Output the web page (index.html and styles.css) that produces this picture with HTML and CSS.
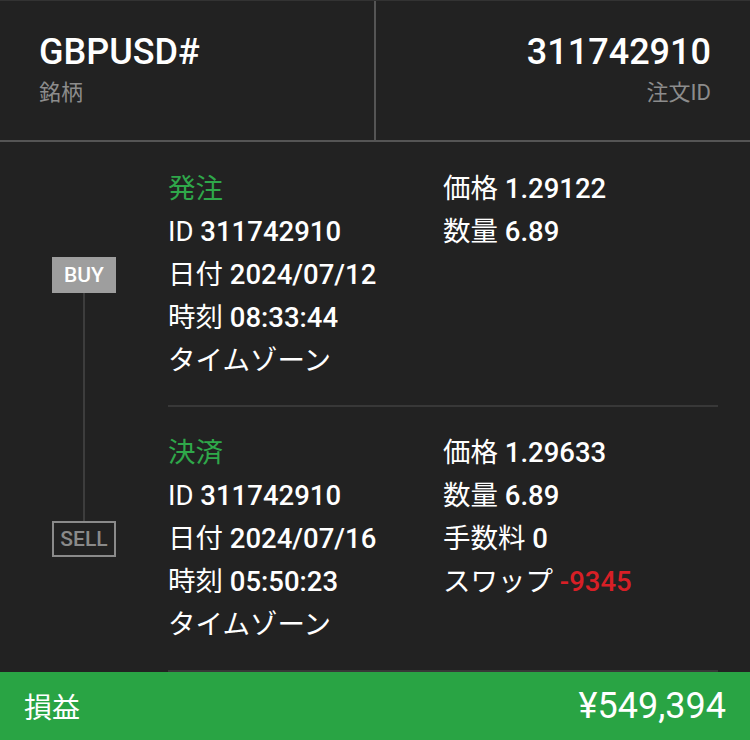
FILE: index.html
```html
<!DOCTYPE html>
<html lang="ja">
<head>
  <meta charset="UTF-8" />
  <meta name="viewport" content="width=device-width, initial-scale=1.0"/>
  <title>注文詳細</title>
  <link rel="stylesheet" href="styles.css">
</head>
<body>

  <!-- Summary header -->
  <header class="summary">
    <div class="summary-cell">
      <div class="summary-value">GBPUSD#</div>
      <div class="summary-label">銘柄</div>
    </div>
    <div class="summary-cell right">
      <div class="summary-value">311742910</div>
      <div class="summary-label">注文ID</div>
    </div>
  </header>

  <!-- Open / close timeline -->
  <main class="trade">
    <div class="timeline">
      <span class="badge buy">BUY</span>
      <span class="connector"></span>
      <span class="badge sell">SELL</span>
    </div>

    <div class="legs">
      <section class="leg">
        <div class="col">
          <div class="row title">発注</div>
          <div class="row">ID <b>311742910</b></div>
          <div class="row">日付 <b>2024/07/12</b></div>
          <div class="row">時刻 <b>08:33:44</b></div>
          <div class="row">タイムゾーン</div>
        </div>
        <div class="col">
          <div class="row">価格 <b>1.29122</b></div>
          <div class="row">数量 <b>6.89</b></div>
        </div>
      </section>

      <section class="leg">
        <div class="col">
          <div class="row title">決済</div>
          <div class="row">ID <b>311742910</b></div>
          <div class="row">日付 <b>2024/07/16</b></div>
          <div class="row">時刻 <b>05:50:23</b></div>
          <div class="row">タイムゾーン</div>
        </div>
        <div class="col">
          <div class="row">価格 <b>1.29633</b></div>
          <div class="row">数量 <b>6.89</b></div>
          <div class="row">手数料 <b>0</b></div>
          <div class="row">スワップ <b class="neg">-9345</b></div>
        </div>
      </section>
    </div>
  </main>

  <!-- Profit footer -->
  <footer class="profit">
    <span class="profit-label">損益</span>
    <span class="profit-value">¥549,394</span>
  </footer>

</body>
</html>
```

FILE: styles.css
```css
* {
  box-sizing: border-box;
}
body {
  margin: 0;
  width: 750px;
  height: 740px;
  overflow: hidden;
  background: #222;
  color: #fff;
  font-family: Roboto, "Noto Sans CJK JP", sans-serif;
}

/* Header */
.summary {
  display: flex;
  height: 142px;
  border-top: 1px solid #333;
  border-bottom: 2px solid #555;
}

.summary-cell {
  flex: 1;
  padding: 27px 39px 0;
}

.summary-cell.right {
  text-align: right;
  border-left: 2px solid #555;
}

.summary-value {
  font-size: 36px;
  font-weight: 500;
  line-height: 48px;
}

.summary-label {
  font-size: 22px;
  color: #8c8c8c;
  line-height: 34px;
}

/* Timeline */
.trade {
  display: flex;
}

.timeline {
  width: 168px;
  display: flex;
  flex-direction: column;
  align-items: center;
  padding: 115px 52px;
}

.badge {
  width: 64px;
  height: 36px;
  display: flex;
  align-items: center;
  justify-content: center;
  font-size: 21px;
  font-weight: 500;
}

.badge.buy {
  background: #9e9e9e;
  color: #fff;
}

.badge.sell {
  border: 2px solid #8a8a8a;
  color: #8a8a8a;
}

.connector {
  flex: 1;
  width: 2px;
  background: #3d3d3d;
}

.legs {
  width: 550px;
}

.leg {
  display: flex;
  padding: 25px 0 23px;
  border-bottom: 2px solid #383838;
}

.leg + .leg {
  padding: 24px 0;
}

.col:first-child {
  width: 275px;
}

.row {
  font-size: 27.5px;
  line-height: 43px;
  white-space: nowrap;
}

.row b {
  font-weight: 500;
}

.row.title {
  color: #2fa84a;
}

.neg {
  color: #d81f26;
}

/* Footer */
.profit {
  display: flex;
  justify-content: space-between;
  align-items: center;
  height: 68px;
  padding: 0 24px;
  background: #29a444;
}

.profit-label {
  font-size: 28px;
}

.profit-value {
  font-size: 36px;
}
```
